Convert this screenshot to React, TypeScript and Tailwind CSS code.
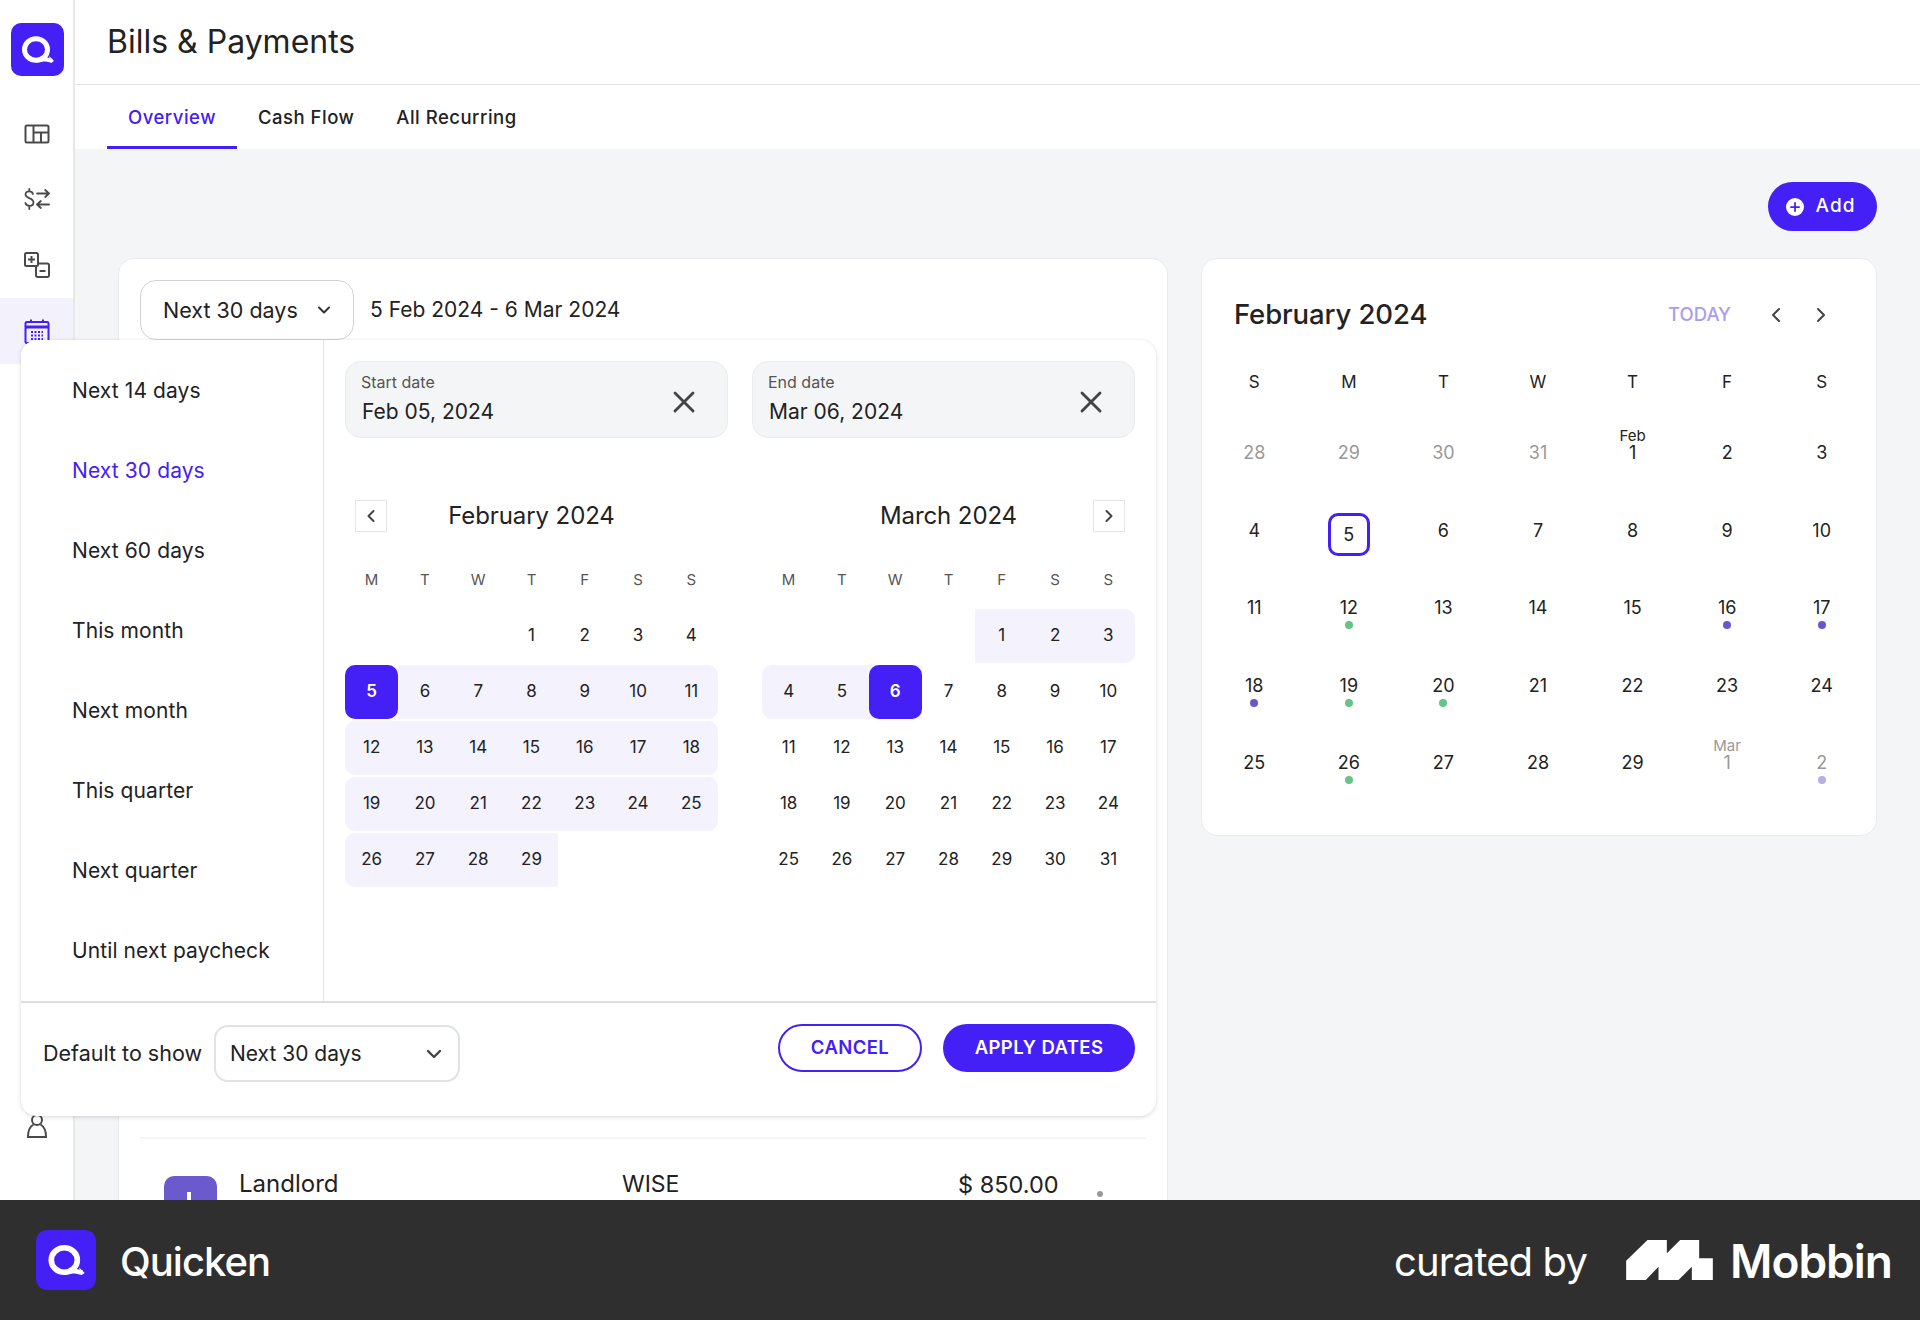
import { ChevronDown, ChevronLeft, ChevronRight, Plus, X } from 'lucide-react';

const presets = ['Next 14 days', 'Next 30 days', 'Next 60 days', 'This month', 'Next month', 'This quarter', 'Next quarter', 'Until next paycheck'];
const weekLetters = ['M', 'T', 'W', 'T', 'F', 'S', 'S'];

type RangeCell = { n?: number; on?: boolean; sel?: boolean; cls?: string };

const febWeeks: RangeCell[][] = [
	[{}, {}, {}, { n: 1 }, { n: 2 }, { n: 3 }, { n: 4 }],
	[{ n: 5, sel: true }, { n: 6, on: true }, { n: 7, on: true }, { n: 8, on: true }, { n: 9, on: true }, { n: 10, on: true }, { n: 11, on: true, cls: 'rounded-r-[10px]' }],
	[{ n: 12, on: true, cls: 'rounded-l-[10px]' }, { n: 13, on: true }, { n: 14, on: true }, { n: 15, on: true }, { n: 16, on: true }, { n: 17, on: true }, { n: 18, on: true, cls: 'rounded-r-[10px]' }],
	[{ n: 19, on: true, cls: 'rounded-l-[10px]' }, { n: 20, on: true }, { n: 21, on: true }, { n: 22, on: true }, { n: 23, on: true }, { n: 24, on: true }, { n: 25, on: true, cls: 'rounded-r-[10px]' }],
	[{ n: 26, on: true, cls: 'rounded-l-[10px]' }, { n: 27, on: true }, { n: 28, on: true }, { n: 29, on: true }, {}, {}, {}],
];

const marWeeks: RangeCell[][] = [
	[{}, {}, {}, {}, { n: 1, on: true }, { n: 2, on: true }, { n: 3, on: true, cls: 'rounded-r-[10px]' }],
	[{ n: 4, on: true, cls: 'rounded-l-[10px]' }, { n: 5, on: true }, { n: 6, sel: true, on: true }, { n: 7 }, { n: 8 }, { n: 9 }, { n: 10 }],
	[{ n: 11 }, { n: 12 }, { n: 13 }, { n: 14 }, { n: 15 }, { n: 16 }, { n: 17 }],
	[{ n: 18 }, { n: 19 }, { n: 20 }, { n: 21 }, { n: 22 }, { n: 23 }, { n: 24 }],
	[{ n: 25 }, { n: 26 }, { n: 27 }, { n: 28 }, { n: 29 }, { n: 30 }, { n: 31 }],
];

type Day = { n: number; muted?: boolean; dot?: 'green' | 'purple' | 'pale'; over?: string; today?: boolean };

const bigCalendar: Day[] = [
	{ n: 28, muted: true }, { n: 29, muted: true }, { n: 30, muted: true }, { n: 31, muted: true }, { n: 1, over: 'Feb' }, { n: 2 }, { n: 3 },
	{ n: 4 }, { n: 5, today: true }, { n: 6 }, { n: 7 }, { n: 8 }, { n: 9 }, { n: 10 },
	{ n: 11 }, { n: 12, dot: 'green' }, { n: 13 }, { n: 14 }, { n: 15 }, { n: 16, dot: 'purple' }, { n: 17, dot: 'purple' },
	{ n: 18, dot: 'purple' }, { n: 19, dot: 'green' }, { n: 20, dot: 'green' }, { n: 21 }, { n: 22 }, { n: 23 }, { n: 24 },
	{ n: 25 }, { n: 26, dot: 'green' }, { n: 27 }, { n: 28 }, { n: 29 }, { n: 1, muted: true, over: 'Mar' }, { n: 2, muted: true, dot: 'pale' },
];

const QLogo = ({ size }: { size: number }) => (
	<svg width={size} height={size} viewBox="0 0 53 53" className="shrink-0">
		<rect width="53" height="53" rx="10" fill="#4520f6" />
		<ellipse cx="25" cy="26.500" rx="11.500" ry="10.800" fill="none" stroke="#fff" strokeWidth="5" />
		<path d="M25 37.300c4 0 6-1 9-1.100l7 1.600" fill="none" stroke="#fff" strokeWidth="4.200" />
		<path d="M38 33l5 5-3 2z" fill="#fff" />
	</svg>
);

const MonthGrid = ({ title, weeks, side }: { title: string; weeks: RangeCell[][]; side: 'left' | 'right' }) => (
	<div className="w-[373px]">
		<div className="flex h-8 items-center justify-between px-[10px]">
			{side === 'left' ? (
				<span className="flex size-8 items-center justify-center border border-[#e4e6e8] text-[#444]">
					<ChevronLeft size={20} strokeWidth={2.4} />
				</span>
			) : (
				<span className="size-8" />
			)}
			<span className="text-[24px] tracking-[-0.1px] text-[#222]">{title}</span>
			{side === 'right' ? (
				<span className="flex size-8 items-center justify-center border border-[#e4e6e8] text-[#444]">
					<ChevronRight size={20} strokeWidth={2.4} />
				</span>
			) : (
				<span className="size-8" />
			)}
		</div>
		<div className="mt-[36px] grid h-6 grid-cols-7 items-center text-center text-[15px] text-[#555]">
			{weekLetters.map((l, i) => (
				<span key={i}>{l}</span>
			))}
		</div>
		<div className="mt-[17px] flex flex-col gap-[2px]">
			{weeks.map((week, i) => (
				<div key={i} className="grid h-[54px] grid-cols-7">
					{week.map((c, j) => (
						<div key={j} className={`flex items-center justify-center text-[17px] text-[#222] ${c.on ? 'bg-[#f3f2fd]' : ''} ${c.cls ?? ''}`}>
							{c.sel ? <div className="flex size-full items-center justify-center rounded-[10px] bg-[#4520f6] font-semibold text-white">{c.n}</div> : c.n}
						</div>
					))}
				</div>
			))}
		</div>
	</div>
);

const DateField = ({ label, value }: { label: string; value: string }) => (
	<div className="flex h-[77px] w-[383px] items-center justify-between rounded-[16px] border border-[#e9ebed] bg-[#f3f5f7] pl-[15px] pr-[25px]">
		<div className="flex flex-col">
			<span className="mt-[-1px] text-[16px] leading-[20px] text-[#555]">{label}</span>
			<span className="ml-[1px] mt-[6px] text-[21px] leading-[28px] text-[#222]">{value}</span>
		</div>
		<X size={36} strokeWidth={1.9} className="mt-[5px] text-[#444]" />
	</div>
);

const Popover = () => (
	<div className="absolute left-[21px] top-[340px] flex h-[776px] w-[1135px] flex-col rounded-[16px] bg-white shadow-[0_1px_4px_rgba(0,0,0,0.16)]">
		<div className="flex h-[661px]">
			<div className="w-[303px] shrink-0 border-r border-[#e2e4e6] pl-[51px] pt-[11px]">
				{presets.map((p) => (
					<div key={p} className={`flex h-[80px] items-center text-[21px] tracking-[0.1px] ${p === 'Next 30 days' ? 'text-[#4520f6]' : 'text-[#222]'}`}>
						{p}
					</div>
				))}
			</div>
			<div className="flex-1 px-[21px] pt-[21px]">
				<div className="flex justify-between">
					<DateField label="Start date" value="Feb 05, 2024" />
					<DateField label="End date" value="Mar 06, 2024" />
				</div>
				<div className="mt-[62px] flex justify-between">
					<MonthGrid title="February 2024" weeks={febWeeks} side="left" />
					<MonthGrid title="March 2024" weeks={marWeeks} side="right" />
				</div>
			</div>
		</div>
		<div className="flex flex-1 items-start justify-between border-t-2 border-[#dcdee0] pl-[22px] pr-[21px]">
			<div className="mt-[22px] flex h-[57px] items-center">
				<span className="w-[171px] text-[21.500px] text-[#222]">Default to show</span>
				<div className="flex h-[57px] w-[246px] items-center justify-between rounded-[14px] border-2 border-[#dfe3e3] pl-[14px] pr-[12px] text-[21px] text-[#222]">
					Next 30 days
					<ChevronDown size={24} strokeWidth={2.4} className="text-[#444]" />
				</div>
			</div>
			<div className="mt-[21px] flex gap-[21px]">
				<button className="h-12 w-[144px] rounded-full border-2 border-[#4520f6] text-[18.500px] font-semibold tracking-[0.4px] text-[#4520f6]">CANCEL</button>
				<button className="h-12 w-[192px] rounded-full bg-[#4520f6] text-[18.500px] font-semibold tracking-[0.4px] text-white">APPLY DATES</button>
			</div>
		</div>
	</div>
);

const Sidebar = () => (
	<aside className="flex w-[75px] shrink-0 flex-col border-r-2 border-[#e6e8ea] bg-white">
		<div className="ml-[11px] mt-[23px]">
			<QLogo size={53} />
		</div>
		<div className="mt-[24px] flex flex-col">
			<div className="flex h-[66px] items-center justify-center pt-[2px]">
				<svg width="26" height="20" viewBox="0 0 26 20" fill="none" stroke="#4a4a4a" strokeWidth="2">
					<rect x="1.500" y="1.500" width="23" height="17" rx="1.500" />
					<path d="M9.500 1.500v17M9.500 8.500h15M17 8.500v10" />
				</svg>
			</div>
			<div className="flex h-[66px] items-center justify-center">
				<svg width="26" height="24" viewBox="0 0 26 24" fill="none" stroke="#4a4a4a" strokeWidth="1.800" strokeLinecap="round" strokeLinejoin="round">
					<path d="M9 7c-.5-1.800-1.800-2.600-3.800-2.600C3 4.400 1.500 5.700 1.500 7.500c0 4.300 8 3 8 8 0 2-1.700 3.300-4 3.300-2.100 0-3.600-1-4.100-2.800M5.300 2v2.400M5.300 18.800V22" />
					<path d="M13 6.500h12M21.200 3l3.800 3.500-3.800 3.500M25 17.500H13M16.800 14L13 17.500l3.800 3.500" />
				</svg>
			</div>
			<div className="flex h-[66px] items-center justify-center">
				<svg width="26" height="26" viewBox="0 0 26 26" fill="none" stroke="#4a4a4a" strokeWidth="2">
					<rect x="1" y="1" width="13" height="13" rx="1.500" />
					<path d="M7.500 4v7M4 7.500h7" />
					<path d="M14 11.500h9.500a1.500 1.500 0 0 1 1.500 1.500v10.500a1.500 1.500 0 0 1-1.500 1.500h-10a1.500 1.500 0 0 1-1.500-1.500V14" />
					<path d="M15.500 19h6" />
				</svg>
			</div>
			<div className="flex h-[66px] items-start justify-center bg-[#f2f1fc] pt-[21px]">
				<svg width="26" height="26" viewBox="0 0 26 26" fill="none" stroke="#4520f6" strokeWidth="2">
					<rect x="1.500" y="3" width="23" height="21" rx="1.500" />
					<path d="M1.500 8h23" strokeWidth="3" />
					<path d="M7 .5v3M19 .5v3" />
					<path d="M7 13h12M7 16.500h12M7 20h12" strokeDasharray="2 1.500" />
				</svg>
			</div>
		</div>
		<div className="mb-[62px] mt-auto flex justify-center">
			<svg width="22" height="24" viewBox="0 0 22 24" fill="none" stroke="#4a4a4a" strokeWidth="2">
				<circle cx="11" cy="6" r="5" />
				<path d="M7.500 10.500C4 12.500 2 18 2 23h18c0-5-2-10.500-5.500-12.500" />
			</svg>
		</div>
	</aside>
);

const BigCalendar = () => (
	<section className="h-[578px] w-[676px] rounded-[16px] border border-[#e9ebed] bg-white">
		<div className="mt-[36px] flex h-10 items-center pl-[32px]">
			<span className="text-[27.500px] font-medium tracking-[-0.1px] text-[#222]">February 2024</span>
			<span className="ml-auto text-[18.500px] font-medium text-[#a99df0]">TODAY</span>
			<ChevronLeft size={24} strokeWidth={2} className="ml-[33px] text-[#444]" />
			<ChevronRight size={24} strokeWidth={2} className="ml-[21px] mr-[43px] text-[#444]" />
		</div>
		<div className="mt-[35px] grid h-6 grid-cols-7 items-center pl-[5px] pr-[7px] text-center text-[17px] text-[#222]">
			{['S', 'M', 'T', 'W', 'T', 'F', 'S'].map((l, i) => (
				<span key={i}>{l}</span>
			))}
		</div>
		<div className="mt-[39px] grid grid-cols-7 pl-[5px] pr-[7px]">
			{bigCalendar.map((d, i) => (
				<div key={i} className="relative flex h-[77.500px] flex-col items-center">
					{d.today ? (
						<div className="mt-[2px] flex h-[43px] w-[42px] items-center justify-center rounded-[10px] border-[3px] border-[#4520f6] text-[18px] text-[#222]">5</div>
					) : (
						<>
							{d.over && <span className={`absolute top-[-6px] text-[15px] leading-[18px] ${d.muted ? 'text-[#999]' : 'text-[#222]'}`}>{d.over}</span>}
							<span className={`mt-[8px] h-6 text-[18px] leading-6 ${d.muted ? 'text-[#999]' : 'text-[#222]'}`}>{d.n}</span>
							{d.dot && (
								<span
									className={`mt-[1px] size-2 rounded-full ${d.dot === 'green' ? 'bg-[#66c487]' : d.dot === 'purple' ? 'bg-[#6a55cc]' : 'bg-[#b7aee6]'}`}
								/>
							)}
						</>
					)}
				</div>
			))}
		</div>
	</section>
);

const BillsCard = () => (
	<section className="w-[1050px] rounded-t-[16px] border border-[#e9ebed] bg-white pl-[21px] pr-[21px] pt-[21px]">
		<div className="flex items-center">
			<div className="flex h-[60px] w-[214px] items-center rounded-[16px] border border-[#cfd3d6] pl-[22px] text-[21.500px] text-[#222]">
				Next 30 days
				<ChevronDown size={20} strokeWidth={2.4} className="ml-[16px] text-[#333]" />
			</div>
			<span className="ml-[16px] text-[21px] text-[#222]">5 Feb 2024 - 6 Mar 2024</span>
		</div>
		<div className="mt-[797px] border-t-2 border-[#f3f4f5]" />
		<div className="relative mt-[37px] flex">
			<div className="ml-[24px] flex size-[53px] shrink-0 justify-center rounded-[10px] bg-[#6a5acd] pt-[16px]">
				<span className="ml-[-4px] h-6 w-1 bg-white" />
			</div>
			<span className="ml-[22px] mt-[-7px] text-[24px] leading-[30px] text-[#222]">Landlord</span>
			<span className="absolute left-[482px] top-[-7px] text-[23px] leading-[30px] text-[#222]">WISE</span>
			<span className="absolute left-[818px] top-[-11px] text-[23.500px] leading-[40px] text-[#222]">$ 850.00</span>
			<span className="absolute left-[957px] top-[15px] size-[6px] rounded-full bg-[#9a9a9a]" />
		</div>
	</section>
);

export default function App() {
	return (
		<div className="flex h-[1320px] flex-col overflow-hidden bg-white [font-family:Inter,sans-serif]">
			<div className="relative flex h-[1200px] overflow-hidden">
				<Sidebar />
				<main className="flex min-w-0 flex-1 flex-col">
					<header className="flex h-[85px] shrink-0 items-center border-b border-[#e3e5e7] pl-[32px]">
						<h1 className="text-[32px] font-normal text-[#222]">Bills &amp; Payments</h1>
					</header>
					<nav className="flex h-[64px] shrink-0 pl-[32px] text-[18.500px] font-medium tracking-[0.5px]">
						<span className="flex items-center border-b-[3px] border-[#4520f6] px-[21px] pt-[5px] text-[#4520f6]">Overview</span>
						<span className="flex items-center px-[21px] pt-[2px] text-[#222]">Cash Flow</span>
						<span className="flex items-center px-[21px] pt-[2px] text-[#222]">All Recurring</span>
					</nav>
					<div className="flex-1 bg-[#f3f5f7] pl-[43px] pr-[43px] pt-[33px]">
						<div className="flex justify-end">
							<button className="flex h-[49px] w-[109px] items-center justify-center gap-[12px] rounded-full bg-[#4520f6] pr-[4px] text-[19px] font-medium tracking-[1px] text-white">
								<span className="flex size-[18px] items-center justify-center rounded-full bg-white text-[#4520f6]">
									<Plus size={14} strokeWidth={3} />
								</span>
								Add
							</button>
						</div>
						<div className="mt-[27px] flex items-start justify-between">
							<BillsCard />
							<BigCalendar />
						</div>
					</div>
				</main>
				<Popover />
			</div>
			<footer className="flex h-[120px] shrink-0 items-center justify-between bg-[#2f2f2f] pl-[36px] pr-[28px] text-white">
				<div className="flex items-center gap-[24px]">
					<QLogo size={60} />
					<span className="mt-[4px] text-[40px] font-medium tracking-[-1px]">Quicken</span>
				</div>
				<div className="flex items-center">
					<span className="mt-[4px] text-[40px] font-normal tracking-[-0.9px]">curated by</span>
					<svg width="87" height="40" viewBox="21 30 260 120" className="ml-[39px]">
						<path d="M21 92 85 30h58v40l40-40h57v55h41v65h-63v-40l-40 40h-60v-40l-38 40H21z" fill="#fff" />
					</svg>
					<span className="ml-[17px] mt-[2px] text-[46px] font-semibold tracking-[-1px]">Mobbin</span>
				</div>
			</footer>
		</div>
	);
}
